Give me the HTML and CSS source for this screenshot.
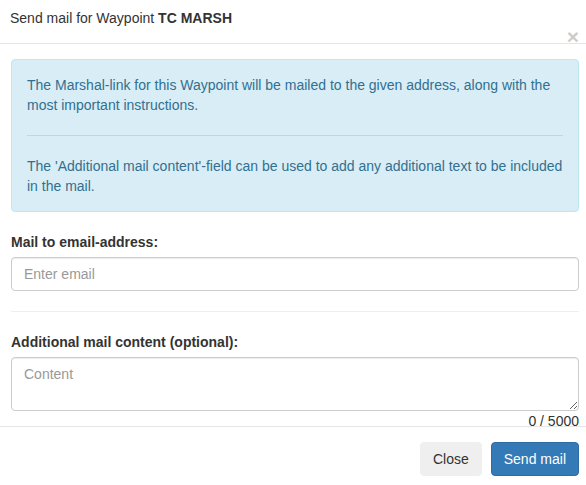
FILE: index.html
```html
<!DOCTYPE html>
<html>
<head>
<meta charset="utf-8">
<title>Send mail</title>
<link rel="stylesheet" href="styles.css">
</head>
<body>
<div class="modal">
  <div class="modal-header">
    <div class="modal-title">Send mail for Waypoint <b>TC MARSH</b></div>
    <button class="close" type="button" aria-label="Close">×</button>
  </div>
  <div class="modal-body">
    <div class="alert">
      <p>The Marshal-link for this Waypoint will be mailed to the given address, along with the most important instructions.</p>
      <hr class="alert-hr">
      <p>The 'Additional mail content'-field can be used to add any additional text to be included in the mail.</p>
    </div>
    <div class="form-group">
      <label class="label" for="email">Mail to email-address:</label>
      <input class="control" id="email" type="email" placeholder="Enter email">
    </div>
    <hr class="sep">
    <div class="form-group last">
      <label class="label" for="content">Additional mail content (optional):</label>
      <textarea class="control area" id="content" rows="2" placeholder="Content"></textarea>
      <div class="counter">0 / 5000</div>
    </div>
  </div>
  <div class="modal-footer">
    <button class="btn btn-default" type="button">Close</button>
    <button class="btn btn-primary" type="button">Send mail</button>
  </div>
</div>
</body>
</html>
```
FILE: styles.css
```css
* { box-sizing: border-box; }
html, body { margin: 0; padding: 0; background: #fff; }
body {
  font-family: "Liberation Sans", Arial, sans-serif;
  font-size: 14px;
  line-height: 20px;
  color: #333;
}
.modal { width: 586px; }
.modal-header {
  padding: 8px 7px 0 10px;
  border-bottom: 1px solid #e5e5e5;
}
.modal-title { line-height: 20px; }
.modal-title b { font-weight: bold; }
.close {
  display: block;
  margin: -2px 0 0 auto;
  height: 17px;
  padding: 0;
  border: 0;
  background: transparent;
  font-family: "Liberation Sans", Arial, sans-serif;
  font-size: 21px;
  font-weight: bold;
  line-height: 21px;
  color: #000;
  opacity: 0.2;
  overflow: visible;
  cursor: pointer;
}
.modal-body { padding: 15px 7px 0 11px; }
.alert {
  padding: 15px;
  margin-bottom: 20px;
  border: 1px solid #bce8f1;
  border-radius: 4px;
  background: #d9edf7;
  color: #31708f;
}
.alert p { margin: 0; }
.alert-hr {
  margin: 20px 0;
  border: 0;
  border-top: 1px solid #a6e1ec;
  height: 0;
}
.form-group { margin-bottom: 15px; }
.form-group.last { margin-bottom: 0; }
.label {
  display: block;
  margin-bottom: 5px;
  font-weight: bold;
  line-height: 20px;
}
.control {
  display: block;
  width: 100%;
  height: 34px;
  padding: 6px 12px;
  border: 1px solid #ccc;
  border-radius: 4px;
  background: #fff;
  font-family: "Liberation Sans", Arial, sans-serif;
  font-size: 14px;
  line-height: 20px;
  color: #555;
  box-shadow: inset 0 1px 1px rgba(0,0,0,.075);
  margin: 0;
}
.control::placeholder { color: #999; opacity: 1; }
.area { height: 54px; resize: vertical; }
.sep {
  margin: 20px 0;
  border: 0;
  border-top: 1px solid #eee;
  height: 0;
}
.counter {
  height: 15px;
  line-height: 20px;
  text-align: right;
  color: #333;
}
.modal-footer {
  display: flex;
  justify-content: flex-end;
  gap: 9px;
  padding: 15px 7px 15px 11px;
  border-top: 1px solid #e5e5e5;
}
.btn {
  height: 34px;
  padding: 6px 12px;
  border: 1px solid transparent;
  border-radius: 4px;
  font-family: "Liberation Sans", Arial, sans-serif;
  font-size: 14px;
  line-height: 20px;
  cursor: pointer;
}
.btn-default { background: #efefef; border-color: #efefef; color: #333; }
.btn-primary { background: #337ab7; border-color: #2e6da4; color: #fff; }
```
